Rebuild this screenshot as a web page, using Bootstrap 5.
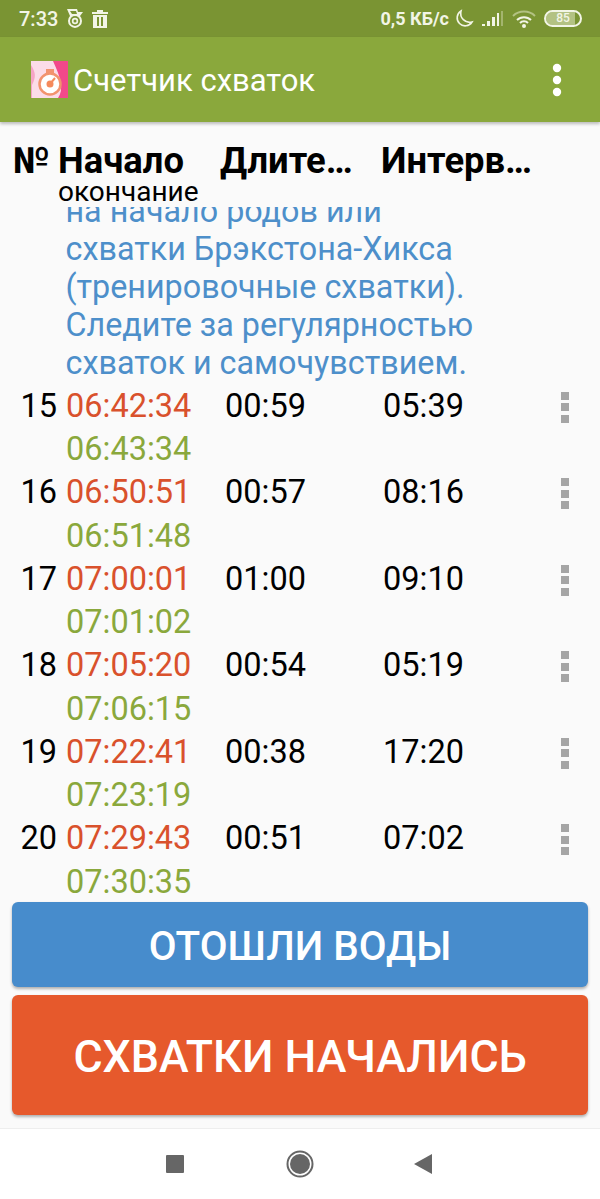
<!DOCTYPE html>
<html lang="ru">
<head>
  <meta charset="UTF-8">
  <meta name="viewport" content="width=device-width, initial-scale=1">
  <title>Счетчик схваток</title>
  <link href="https://cdn.jsdelivr.net/npm/bootstrap@5.3.0/dist/css/bootstrap.min.css" rel="stylesheet">
  <style>
    html, body { height: 100%; overflow: hidden; }
    body { width: 600px; height: 1199px; background: #fafafa; font-family: Roboto, "Noto Sans", sans-serif; color: #000; }
    .phone { height: 1199px; }
    .status-bar { height: 37px; background: #7a9433; color: #f2f5e6; font-size: 20px; font-weight: 500; padding: 0 18px 0 19px; }
    .status-bar svg { display: block; }
    .status-speed { font-size: 18px; font-weight: 700; margin-right: 5px; }
    .batt { width: 38px; height: 17px; border: 2px solid #f2f5e6; border-radius: 9px; font-size: 12px; line-height: 13px; text-align: center; background: linear-gradient(90deg, #b3c283 85%, transparent 85%); background-clip: content-box; }
    .app-bar { height: 85px; background: #8aa83c; color: #fff; box-shadow: 0 2px 3px rgba(0,0,0,.25); padding: 0 37px 0 31px; position: relative; z-index: 2; }
    .app-title { font-size: 31px; margin-left: 5px; padding-top: 3px; }
    .head-row { height: 85px; padding-top: 17px; position: relative; z-index: 1; flex: none; }
    .col-num { width: 59px; flex: none; }
    .col-start { width: 161px; flex: none; }
    .col-dur { width: 161px; flex: none; }
    .head-title { font-size: 36.4px; font-weight: 700; line-height: 43px; white-space: nowrap; }
    .head-row .col-num { padding-left: 13px; width: 58px; }
    .head-row .col-start { width: 162px; }
    .head-sub { font-size: 28px; line-height: 24px; margin-top: -2px; white-space: nowrap; }
    .scroll-area { height: 695px; overflow: hidden; flex: none; }
    .hint { color: #4d8fca; font-size: 32.3px; line-height: 38px; padding-left: 65.5px; margin-top: -15px; margin-bottom: 2.5px; white-space: nowrap; }
    .data-row { height: 86.6px; font-size: 32.5px; line-height: 43.5px; }
    .data-row .col-num { text-align: right; padding-right: 2px; }
    .data-row .col-start { padding-left: 7px; }
    .data-row .col-dur { padding-left: 5px; }
    .data-row .col-gap { width: 180px; flex: none; padding-left: 2px; }
    .t-start { color: #d9512c; }
    .t-end { color: #8aa83c; }
    .dots { width: 9px; margin-top: 7px; flex: none; }
    .dots i { display: block; width: 8px; height: 8px; background: #a5a5a5; margin-bottom: 3.5px; }
    .btn-water, .btn-start { display: block; width: 576px; color: #fff; border: 0; border-radius: 6px; font-weight: 500; box-shadow: 0 2px 3px rgba(0,0,0,.3); padding-top: 9px; padding-bottom: 4px; flex: none; }
    .btn-water { height: 85px; background: #478ccc; font-size: 40.4px; margin: 0 12px 8px; }
    .btn-start { height: 120px; background: #e6592c; font-size: 44.7px; margin: 0 12px; }
    .btn-water:hover { background: #478ccc; color: #fff; }
    .btn-start:hover { background: #e6592c; color: #fff; }
    .nav-bar { height: 71px; margin-top: 13px; background: #fff; border-top: 1px solid #eee; flex: none; }
    .nav-bar svg { display: block; }
    .menu-dots svg { display: block; }
  </style>
</head>
<body>
  <div class="phone d-flex flex-column">
    <div class="status-bar d-flex align-items-center">
      <span>7:33</span>
      <svg class="ms-2" width="18" height="20" viewBox="0 0 18 20" fill="#f2f5e6"><path d="M1 0h10l1 3h5l-3 4a7 7 0 1 1-10 0z"/><path d="M4 2h6l1 3H6z" fill="#7a9433"/><circle cx="9" cy="12" r="5" fill="#7a9433"/><circle cx="9" cy="12" r="3.200"/><circle cx="9" cy="12" r="1.500" fill="#7a9433"/></svg>
      <svg class="ms-2" width="16" height="18" viewBox="0 0 16 18" fill="#f2f5e6"><path d="M5 0h6v2h5v2H0V2h5zM1 5h14v13H1zM5 7v9h2V7zm4 0v9h2V7z" fill-rule="evenodd"/></svg>
      <span class="ms-auto status-speed">0,5 КБ/с</span>
      <svg width="20" height="20" viewBox="0 0 20 20" fill="none" stroke="#f2f5e6" stroke-width="1.6"><path d="M7 2a8 8 0 1 0 11 11A9 9 0 0 1 7 2z"/></svg>
      <svg class="signal" width="22" height="18" viewBox="0 0 22 18" style="margin-left:7px"><path fill="#f2f5e6" d="M1 14h3v2H1zM6 11h3v5H6zM11 7h3v9h-3zM16 3h2v13h-2z"/><path fill="#a4b56e" d="M20 1h2v15h-2z"/></svg>
      <svg width="24" height="18" viewBox="0 0 24 18" fill="none" stroke="#f2f5e6" stroke-width="2" style="margin-left:9px"><path stroke="#b3c283" d="M1 6a16 16 0 0 1 22 0"/><path d="M5 10a10 10 0 0 1 14 0M8 13a5.500 5.500 0 0 1 8 0"/><circle cx="12" cy="16" r="1" fill="#f2f5e6"/></svg>
      <div class="batt ms-2">85</div>
    </div>
    <div class="app-bar d-flex align-items-center">
      <svg width="37" height="37" viewBox="0 0 37 37"><rect width="37" height="37" fill="#fbdce8"/><path d="M22 0h15v37H27c6-8 3-20-5-37z" fill="#f2498a"/><path d="M0 4c5 8 5 12 1 20v13H0z" fill="#f6a5c5"/><rect x="15" y="8" width="8" height="4" fill="#f2936e"/><circle cx="19" cy="23" r="10.500" fill="#fff" stroke="#f2936e" stroke-width="2.500"/><circle cx="19" cy="23" r="3.500" fill="#f58a5c"/><path d="M19 23l5-6" stroke="#f58a5c" stroke-width="2"/></svg>
      <span class="app-title">Счетчик схваток</span>
      <div class="ms-auto menu-dots d-flex flex-column">
        <svg width="12" height="12"><circle cx="6" cy="6" r="4.200" fill="#fff"/></svg>
        <svg width="12" height="12"><circle cx="6" cy="6" r="4.200" fill="#fff"/></svg>
        <svg width="12" height="12"><circle cx="6" cy="6" r="4.200" fill="#fff"/></svg>
      </div>
    </div>
    <div class="head-row d-flex">
      <div class="col-num head-title">№</div>
      <div class="col-start">
        <div class="head-title">Начало</div>
        <div class="head-sub">окончание</div>
      </div>
      <div class="col-dur head-title">Длите…</div>
      <div class="head-title">Интерв…</div>
    </div>
    <div class="scroll-area">
      <div class="hint">на начало родов или<br>схватки Брэкстона-Хикса<br>(тренировочные схватки).<br>Следите за регулярностью<br>схваток и самочувствием.</div>
      <div class="data-row d-flex"><div class="col-num">15</div><div class="col-start"><div class="t-start">06:42:34</div><div class="t-end">06:43:34</div></div><div class="col-dur">00:59</div><div class="col-gap">05:39</div><div class="dots"><i></i><i></i><i></i></div></div>
      <div class="data-row d-flex"><div class="col-num">16</div><div class="col-start"><div class="t-start">06:50:51</div><div class="t-end">06:51:48</div></div><div class="col-dur">00:57</div><div class="col-gap">08:16</div><div class="dots"><i></i><i></i><i></i></div></div>
      <div class="data-row d-flex"><div class="col-num">17</div><div class="col-start"><div class="t-start">07:00:01</div><div class="t-end">07:01:02</div></div><div class="col-dur">01:00</div><div class="col-gap">09:10</div><div class="dots"><i></i><i></i><i></i></div></div>
      <div class="data-row d-flex"><div class="col-num">18</div><div class="col-start"><div class="t-start">07:05:20</div><div class="t-end">07:06:15</div></div><div class="col-dur">00:54</div><div class="col-gap">05:19</div><div class="dots"><i></i><i></i><i></i></div></div>
      <div class="data-row d-flex"><div class="col-num">19</div><div class="col-start"><div class="t-start">07:22:41</div><div class="t-end">07:23:19</div></div><div class="col-dur">00:38</div><div class="col-gap">17:20</div><div class="dots"><i></i><i></i><i></i></div></div>
      <div class="data-row d-flex"><div class="col-num">20</div><div class="col-start"><div class="t-start">07:29:43</div><div class="t-end">07:30:35</div></div><div class="col-dur">00:51</div><div class="col-gap">07:02</div><div class="dots"><i></i><i></i><i></i></div></div>
    </div>
    <button type="button" class="btn btn-water">ОТОШЛИ ВОДЫ</button>
    <button type="button" class="btn btn-start">СХВАТКИ НАЧАЛИСЬ</button>
    <div class="nav-bar d-flex align-items-center">
      <svg width="18" height="18" style="margin-left:166px"><rect width="18" height="18" rx="1" fill="#666"/></svg>
      <svg width="28" height="28" viewBox="0 0 28 28" style="margin-left:102px"><circle cx="14" cy="14" r="12.500" fill="none" stroke="#666" stroke-width="2"/><circle cx="14" cy="14" r="10" fill="#666"/></svg>
      <svg width="18" height="20" viewBox="0 0 18 20" style="margin-left:100px"><path d="M18 0v20L0 10z" fill="#666"/></svg>
    </div>
  </div>
  <script src="https://cdn.jsdelivr.net/npm/bootstrap@5.3.0/dist/js/bootstrap.bundle.min.js"></script>
</body>
</html>
